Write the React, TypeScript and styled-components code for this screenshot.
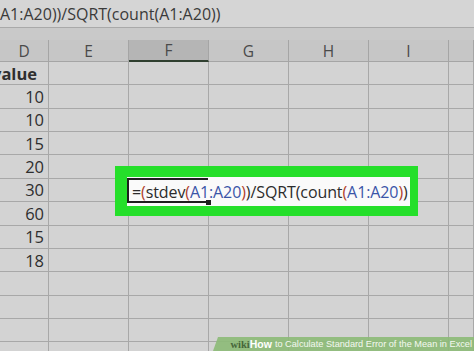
import React from "react";
import styled, { createGlobalStyle } from "styled-components";

const Global = createGlobalStyle`
  html, body { margin: 0; padding: 0; }
  body { width: 474px; height: 351px; overflow: hidden; background: #d2d2d2; }
`;

const Page = styled.div`
  position: relative;
  width: 474px;
  height: 351px;
  overflow: hidden;
  font-family: "Open Sans", "Liberation Sans", sans-serif;
  background: #d2d2d2;
`;

const FormulaBar = styled.div`
  height: 27px;
  background: #d5d5d5;
  border-bottom: 1px solid #a9a9a9;
  display: flex;
  align-items: center;
  overflow: hidden;
  white-space: nowrap;
  font-size: 16px;
  color: #3a3a3a;
`;

const Band = styled.div`
  height: 12px;
  background: #c9c9c9;
`;

const COLS = "49px 80px 80px 80px 80px 80px 25px";

const HeaderRow = styled.div`
  display: grid;
  grid-template-columns: ${COLS};
  height: 22px;
`;

const HeaderCell = styled.div<{ $active?: boolean }>`
  box-sizing: border-box;
  display: flex;
  align-items: center;
  justify-content: center;
  font-size: 15.5px;
  color: #4a4a4a;
  background: ${(p) => (p.$active ? "#b5b5b5" : "#c6c6c6")};
  border-right: 1px solid #a5a5a5;
  border-bottom: ${(p) => (p.$active ? "2px solid #2f3f2f" : "1px solid #a5a5a5")};
  overflow: hidden;
`;

const Row = styled.div`
  display: grid;
  grid-template-columns: ${COLS};
  height: 23.36px;
`;

const Cell = styled.div<{ $bold?: boolean }>`
  box-sizing: border-box;
  display: flex;
  align-items: center;
  justify-content: flex-end;
  padding-right: ${(p) => (p.$bold ? "11px" : "4px")};
  font-size: 16.5px;
  font-weight: ${(p) => (p.$bold ? 700 : 400)};
  color: #2e2e2e;
  background: #d3d3d3;
  border-right: 1px solid #a8a8a8;
  border-bottom: 1px solid #a8a8a8;
  overflow: hidden;
  white-space: nowrap;
`;

const GreenFrame = styled.div`
  position: absolute;
  left: 115px;
  top: 166px;
  width: 303px;
  height: 50px;
  box-sizing: border-box;
  background: #25df2a;
  padding: 11px 8px 10px 12px;
`;

const EditBox = styled.div`
  position: relative;
  height: 100%;
  background: #fafafa;
  display: flex;
  align-items: center;
  white-space: nowrap;
  font-size: 16px;
  letter-spacing: -0.1px;
  color: #2c2c2c;
  padding-left: 5px;
`;

const CellCursor = styled.div`
  position: absolute;
  left: 0;
  top: 1px;
  width: 81px;
  height: 25px;
  box-sizing: border-box;
  border-left: 2px solid #1e1e1e;
  border-top: 2px solid #1e1e1e;
  border-bottom: 2px solid #1e1e1e;
  pointer-events: none;
  &::after {
    content: "";
    position: absolute;
    right: -3px;
    bottom: -4px;
    width: 5px;
    height: 5px;
    background: #1e1e1e;
  }
`;

const Paren = styled.span`
  color: #b0402a;
`;

const Ref = styled.span`
  color: #3a55a8;
`;

const Banner = styled.div`
  position: absolute;
  right: 0;
  bottom: 0;
  width: 261px;
  height: 14px;
  background: rgba(141, 187, 120, 0.92);
  clip-path: polygon(5px 0, 100% 0, 100% 100%, 0 100%);
  display: flex;
  align-items: center;
  justify-content: flex-end;
  padding-right: 2px;
  box-sizing: border-box;
  font-family: "Liberation Sans", Arial, sans-serif;
  font-size: 9.2px;
  color: #f4f8f0;
  white-space: nowrap;
`;

const Wiki = styled.span`
  font-family: "Liberation Serif", serif;
  font-weight: 700;
  font-size: 10.5px;
  color: #46663a;
`;

const How = styled.span`
  font-weight: 700;
  font-size: 10.5px;
  margin-right: 3px;
  color: #ffffff;
`;

const headers = ["D", "E", "F", "G", "H", "I", ""];
const values: (string | null)[] = ["value", "10", "10", "15", "20", "30", "60", "15", "18", null, null, null, null];

function Formula() {
  return (
    <>
      =<Paren>(</Paren>stdev<Paren>(</Paren>
      <Ref>A1:A20</Ref>
      <Paren>)</Paren>)/SQRT(count<Paren>(</Paren>
      <Ref>A1:A20</Ref>
      <Paren>)</Paren>)
    </>
  );
}

export default function App() {
  return (
    <Page>
      <Global />
      <FormulaBar>A1:A20))/SQRT(count(A1:A20))</FormulaBar>
      <Band />
      <HeaderRow>
        {headers.map((h, i) => (
          <HeaderCell key={i} $active={h === "F"}>
            {h}
          </HeaderCell>
        ))}
      </HeaderRow>
      {values.map((v, r) => (
        <Row key={r}>
          <Cell $bold={r === 0}>{v ?? ""}</Cell>
          <Cell />
          <Cell />
          <Cell />
          <Cell />
          <Cell />
          <Cell />
        </Row>
      ))}
      <GreenFrame>
        <EditBox>
          <CellCursor />
          <Formula />
        </EditBox>
      </GreenFrame>
      <Banner>
        <Wiki>wiki</Wiki>
        <How>How</How>
        to Calculate Standard Error of the Mean in Excel
      </Banner>
    </Page>
  );
}
